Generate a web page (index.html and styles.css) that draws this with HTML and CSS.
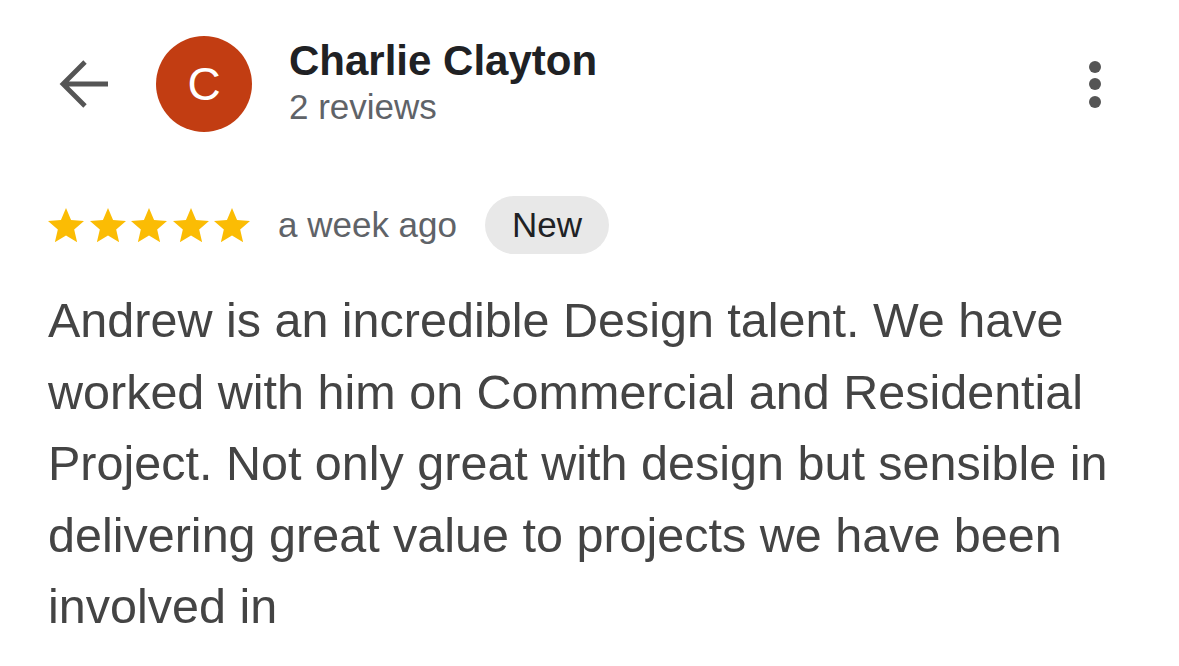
FILE: index.html
```html
<!DOCTYPE html>
<html>
<head>
<meta charset="utf-8">
<link rel="stylesheet" href="styles.css">
</head>
<body>
<div class="page">
  <header class="header">
    <button class="back" aria-label="Back">
      <svg width="52" height="52" viewBox="0 0 52 52"><path d="M50 26H5M27 4L5 26l22 22" fill="none" stroke="#555" stroke-width="4.8" stroke-linecap="butt" stroke-linejoin="miter"/></svg>
    </button>
    <div class="avatar">C</div>
    <div class="who">
      <div class="name">Charlie Clayton</div>
      <div class="count">2 reviews</div>
    </div>
    <div class="more" aria-label="More">
      <span></span><span></span><span></span>
    </div>
  </header>
  <div class="meta">
    <div class="stars">
      <svg viewBox="2 2 20 19.27"><path d="M12 17.27L18.18 21l-1.64-7.03L22 9.24l-7.19-.61L12 2 9.19 8.63 2 9.24l5.46 4.73L5.82 21z"/></svg>
      <svg viewBox="2 2 20 19.27"><path d="M12 17.27L18.18 21l-1.64-7.03L22 9.24l-7.19-.61L12 2 9.19 8.63 2 9.24l5.46 4.73L5.82 21z"/></svg>
      <svg viewBox="2 2 20 19.27"><path d="M12 17.27L18.18 21l-1.64-7.03L22 9.24l-7.19-.61L12 2 9.19 8.63 2 9.24l5.46 4.73L5.82 21z"/></svg>
      <svg viewBox="2 2 20 19.27"><path d="M12 17.27L18.18 21l-1.64-7.03L22 9.24l-7.19-.61L12 2 9.19 8.63 2 9.24l5.46 4.73L5.82 21z"/></svg>
      <svg viewBox="2 2 20 19.27"><path d="M12 17.27L18.18 21l-1.64-7.03L22 9.24l-7.19-.61L12 2 9.19 8.63 2 9.24l5.46 4.73L5.82 21z"/></svg>
    </div>
    <span class="when">a week ago</span>
    <span class="chip">New</span>
  </div>
  <p class="review">Andrew is an incredible Design talent. We have worked with him on Commercial and Residential Project. Not only great with design but sensible in delivering great value to projects we have been involved in</p>
</div>
</body>
</html>
```

FILE: styles.css
```css
html, body {
  margin: 0;
  padding: 0;
  background: #fff;
}
body {
  font-family: "Liberation Sans", Arial, sans-serif;
  color: #202124;
}
.page {
  width: 1179px;
  height: 666px;
  overflow: hidden;
  box-sizing: border-box;
  padding: 36px 48px 0 48px;
}
.header {
  display: flex;
  align-items: center;
  height: 96px;
}
.back {
  border: 0;
  background: none;
  padding: 0;
  margin-left: 10px;
  width: 52px;
  height: 52px;
  display: flex;
}
.avatar {
  margin-left: 46px;
  width: 96px;
  height: 96px;
  border-radius: 50%;
  background: #c23d12;
  color: #fff;
  font-size: 46px;
  display: flex;
  align-items: center;
  justify-content: center;
  flex-shrink: 0;
}
.who {
  margin-left: 37px;
  flex: 1;
  display: flex;
  flex-direction: column;
  align-self: flex-start;
}
.name {
  font-size: 42px;
  font-weight: 700;
  line-height: 50px;
  margin-top: 0;
  color: #202124;
}
.count {
  font-size: 35px;
  line-height: 42px;
  color: #5f6368;
}
.more {
  display: flex;
  flex-direction: column;
  gap: 5.5px;
  margin-right: 30px;
}
.more span {
  width: 12px;
  height: 12px;
  border-radius: 50%;
  background: #555;
}
.meta {
  display: flex;
  align-items: center;
  margin-top: 64px;
  height: 58px;
}
.stars {
  display: flex;
  gap: 5.5px;
  margin-left: 0;
}
.stars svg {
  width: 36px;
  height: 34.7px;
  fill: #fbbc04;
}
.when {
  margin-left: 28px;
  font-size: 35px;
  color: #5f6368;
}
.chip {
  margin-left: 28px;
  height: 58px;
  padding: 0 27px;
  border-radius: 29px;
  background: #e8e8e8;
  color: #202124;
  font-size: 35px;
  display: flex;
  align-items: center;
}
.review {
  margin: 31px 0 0 0;
  font-size: 48.5px;
  line-height: 71.6px;
  color: #444;
  width: 1100px;
}
```
